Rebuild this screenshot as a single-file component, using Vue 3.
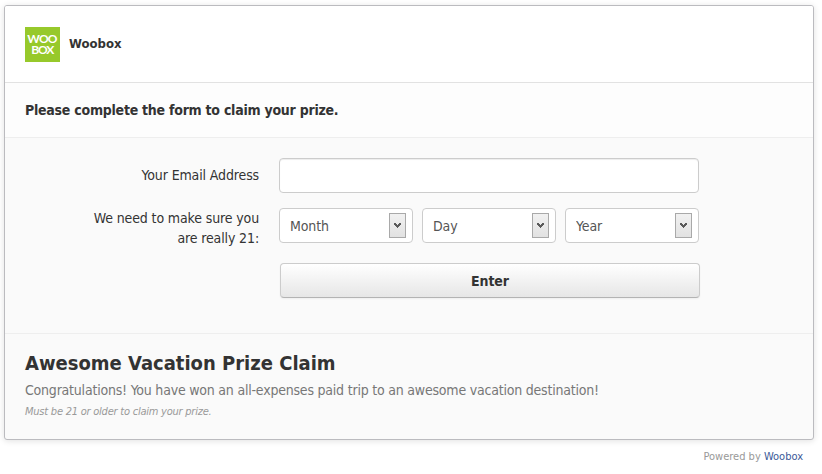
<template>
  <div class="page">
    <div class="panel">
      <header class="brand">
        <svg class="logo" width="35" height="35" viewBox="0 0 35 35">
          <rect width="35" height="35" fill="#97c92b" />
          <text x="2.3 13.9 22.8" y="16.4 16.4 15.6">WOO</text>
          <text x="6.2 13 21.3" y="27 26.6 27">BOX</text>
        </svg>
        <strong class="brand-name">Woobox</strong>
      </header>
      <div class="notice">Please complete the form to claim your prize.</div>
      <form class="form" @submit.prevent>
        <div class="row">
          <label class="label" for="email">Your Email Address</label>
          <input id="email" v-model="email" class="input" type="text" />
        </div>
        <div class="row row-date">
          <div class="label">We need to make sure you<br />are really 21:</div>
          <div class="selects">
            <div v-for="name in parts" :key="name" class="select">
              <select :aria-label="name">
                <option>{{ name }}</option>
              </select>
              <span class="arrow">
                <svg width="7" height="7" viewBox="0 0 7 7">
                  <path d="M0 1h2v1h1v1h1v-1h1v-1h2v2h-1v1h-1v1h-1v1h-1v-1h-1v-1h-1v-1h-1z" fill="#5a5a5a" />
                </svg>
              </span>
            </div>
          </div>
        </div>
        <button class="enter" type="submit">Enter</button>
      </form>
      <section class="details">
        <h1>Awesome Vacation Prize Claim</h1>
        <p class="message">Congratulations! You have won an all-expenses paid trip to an awesome vacation destination!</p>
        <p class="terms">Must be 21 or older to claim your prize.</p>
      </section>
    </div>
    <footer class="powered"><span>Powered by</span> <a href="#">Woobox</a></footer>
  </div>
</template>

<script setup>
import { ref } from 'vue';

const email = ref('');
const parts = ['Month', 'Day', 'Year'];
</script>

<style>
body {
  background: #fff;
}
</style>

<style scoped>
.page {
  box-sizing: border-box;
  width: 822px;
  height: 474px;
  padding: 5px 8px 0 4px;
  overflow: hidden;
  font-family: Tahoma, "DejaVu Sans Condensed", "DejaVu Sans", sans-serif;
  font-size: 14px;
  color: #333;
}

.panel {
  box-sizing: border-box;
  display: flex;
  flex-direction: column;
  width: 810px;
  height: 435px;
  overflow: hidden;
  border: 1px solid #bbbbbf;
  border-radius: 3px;
  background: #fafafa;
  box-shadow: 0 1px 6px rgba(0, 0, 0, 0.12);
}

.brand {
  box-sizing: border-box;
  display: flex;
  align-items: center;
  gap: 9px;
  height: 77px;
  padding: 0 20px;
  border-bottom: 1px solid #e2e2e2;
  background: #fff;
}

.logo text {
  fill: #fff;
  font-family: Lato, sans-serif;
  font-size: 12px;
  font-weight: 700;
}

.brand-name {
  font-size: 13px;
  line-height: 16px;
}

.notice {
  box-sizing: border-box;
  height: 55px;
  padding: 0 20px;
  border-bottom: 1px solid #eee;
  background: #fdfdfd;
  font-weight: bold;
  letter-spacing: -0.25px;
  line-height: 54px;
}

.form {
  box-sizing: border-box;
  height: 196px;
  padding: 20px 0 0 20px;
  border-bottom: 1px solid #eee;
}

.row {
  display: flex;
  gap: 20px;
}

.row-date {
  margin-top: 15px;
}

.label {
  width: 234px;
  padding-top: 7px;
  text-align: right;
  letter-spacing: -0.13px;
  line-height: 20px;
}

.row-date .label {
  height: 35px;
  padding-top: 0;
}

.input {
  box-sizing: border-box;
  width: 420px;
  height: 35px;
  padding: 0 10px;
  border: 1px solid #ccc;
  border-radius: 4px;
  outline: none;
  background: #fff;
  box-shadow: inset 0 1px 1px rgba(0, 0, 0, 0.075);
  font: inherit;
}

.selects {
  display: flex;
  gap: 9px;
}

.select {
  box-sizing: border-box;
  display: flex;
  align-items: center;
  width: 134px;
  height: 35px;
  padding: 0 6px 0 10px;
  border: 1px solid #ccc;
  border-radius: 4px;
  background: #fff;
}

.select select {
  flex: 1;
  min-width: 0;
  height: 30px;
  padding: 0;
  border: 0;
  appearance: none;
  background: none;
  color: #555;
  font: inherit;
  letter-spacing: -0.1px;
}

.arrow {
  box-sizing: border-box;
  display: flex;
  align-items: center;
  justify-content: center;
  width: 17px;
  height: 25px;
  border: 1px solid #a9a9a9;
  background: linear-gradient(#f1f1f1, #e2e2e2);
}

.enter {
  display: block;
  box-sizing: border-box;
  width: 420px;
  height: 35px;
  margin: 20px 0 0 255px;
  padding: 0;
  border: 1px solid #ccc;
  border-bottom-color: #b3b3b3;
  border-radius: 4px;
  background: linear-gradient(#fff, #e6e6e6);
  box-shadow: 0 1px 2px rgba(0, 0, 0, 0.05);
  color: #333;
  font: bold 14px Tahoma, "DejaVu Sans Condensed", sans-serif;
  letter-spacing: -0.1px;
}

.details {
  padding: 16px 20px;
}

h1,
p {
  margin: 0;
  white-space: nowrap;
}

h1 {
  font-size: 20px;
  line-height: 26px;
}

.message {
  margin-top: 4px;
  color: #777;
  letter-spacing: -0.21px;
  line-height: 20px;
}

.terms {
  margin-top: 4px;
  color: #999;
  font-size: 11px;
  font-style: italic;
  letter-spacing: -0.23px;
  line-height: 16px;
}

.powered {
  margin-top: 9px;
  padding-right: 11px;
  color: #999;
  font-size: 11px;
  line-height: 16px;
  text-align: right;
}

.powered a {
  color: #3b5998;
  text-decoration: none;
}
</style>
